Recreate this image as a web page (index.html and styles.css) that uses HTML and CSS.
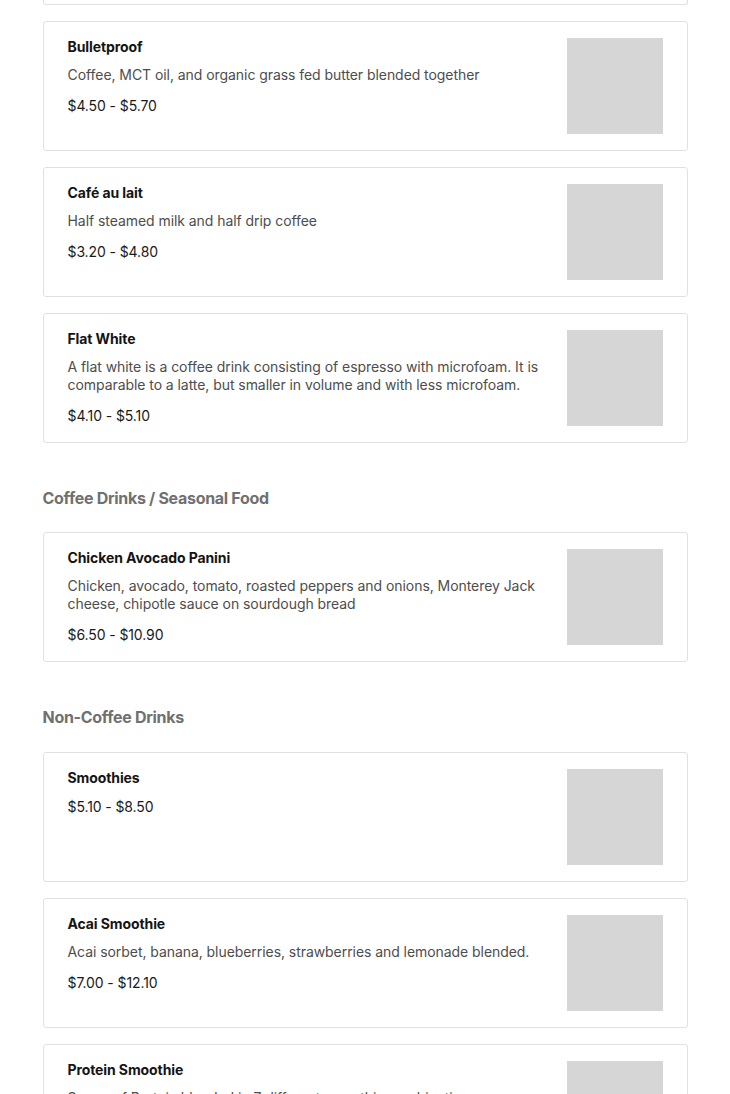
FILE: index.html
```html
<!DOCTYPE html>
<html lang="en">
<head>
<meta charset="utf-8">
<title>Menu</title>
<link rel="stylesheet" href="styles.css">
</head>
<body>
<main class="menu">
  <section class="category">
    <div class="card-end"></div>
    <div class="card">
      <div class="info">
        <h3 class="name">Bulletproof</h3>
        <p class="desc">Coffee, MCT oil, and organic grass fed butter blended together</p>
        <p class="price">$4.50 - $5.70</p>
      </div>
      <div class="thumb"></div>
    </div>
    <div class="card">
      <div class="info">
        <h3 class="name">Café au lait</h3>
        <p class="desc">Half steamed milk and half drip coffee</p>
        <p class="price">$3.20 - $4.80</p>
      </div>
      <div class="thumb"></div>
    </div>
    <div class="card">
      <div class="info">
        <h3 class="name">Flat White</h3>
        <p class="desc">A flat white is a coffee drink consisting of espresso with microfoam. It is comparable to a latte, but smaller in volume and with less microfoam.</p>
        <p class="price">$4.10 - $5.10</p>
      </div>
      <div class="thumb"></div>
    </div>
  </section>

  <section class="category">
    <h2 class="cat-title">Coffee Drinks / Seasonal Food</h2>
    <div class="card">
      <div class="info">
        <h3 class="name">Chicken Avocado Panini</h3>
        <p class="desc">Chicken, avocado, tomato, roasted peppers and onions, Monterey Jack cheese, chipotle sauce on sourdough bread</p>
        <p class="price">$6.50 - $10.90</p>
      </div>
      <div class="thumb"></div>
    </div>
  </section>

  <section class="category">
    <h2 class="cat-title">Non-Coffee Drinks</h2>
    <div class="card">
      <div class="info">
        <h3 class="name">Smoothies</h3>
        <p class="price">$5.10 - $8.50</p>
      </div>
      <div class="thumb"></div>
    </div>
    <div class="card">
      <div class="info">
        <h3 class="name">Acai Smoothie</h3>
        <p class="desc">Acai sorbet, banana, blueberries, strawberries and lemonade blended.</p>
        <p class="price">$7.00 - $12.10</p>
      </div>
      <div class="thumb"></div>
    </div>
    <div class="card">
      <div class="info">
        <h3 class="name">Protein Smoothie</h3>
        <p class="desc">Scoop of Protein blended in 7 different smoothie combinations</p>
        <p class="price">$6.50 - $9.90</p>
      </div>
      <div class="thumb"></div>
    </div>
  </section>
</main>
</body>
</html>
```

FILE: styles.css
```css
* { box-sizing: border-box; }

html, body {
  margin: 0;
  padding: 0;
  background: #ffffff;
}

body {
  font-family: Inter, "Liberation Sans", sans-serif;
  color: #1a1a1a;
  overflow: hidden;
}

.menu {
  width: 645px;
  margin: 0 auto;
  display: flex;
  flex-direction: column;
}

.category {
  display: flex;
  flex-direction: column;
  gap: 16px;
}

.card-end {
  height: 5px;
  border: 1px solid #e1e1e1;
  border-top: none;
  border-radius: 0 0 3px 3px;
}

.cat-title {
  margin: 43px 0 6px;
  font-size: 16px;
  line-height: 24px;
  font-weight: 700;
  letter-spacing: -0.3px;
  color: #707070;
}

.category + .category + .category .cat-title {
  margin-bottom: 7px;
}

.card {
  display: flex;
  gap: 24px;
  padding: 16px 24px;
  border: 1px solid #e1e1e1;
  border-radius: 3px;
  background: #fff;
}

.info {
  flex: 1;
  display: flex;
  flex-direction: column;
  gap: 12px;
  min-width: 0;
}

.name {
  margin: 1px 0 -1px;
  font-size: 14px;
  line-height: 16px;
  font-weight: 700;
  letter-spacing: -0.1px;
  color: #141414;
}

.desc {
  margin: 0;
  font-size: 14px;
  line-height: 18px;
  letter-spacing: -0.06px;
  color: #4d4d4d;
}

.price {
  margin: 1px 0 0;
  font-size: 14px;
  line-height: 18px;
  letter-spacing: -0.1px;
  color: #1a1a1a;
}

.thumb {
  flex: 0 0 96px;
  width: 96px;
  height: 96px;
  background: #d6d6d6;
}
```
